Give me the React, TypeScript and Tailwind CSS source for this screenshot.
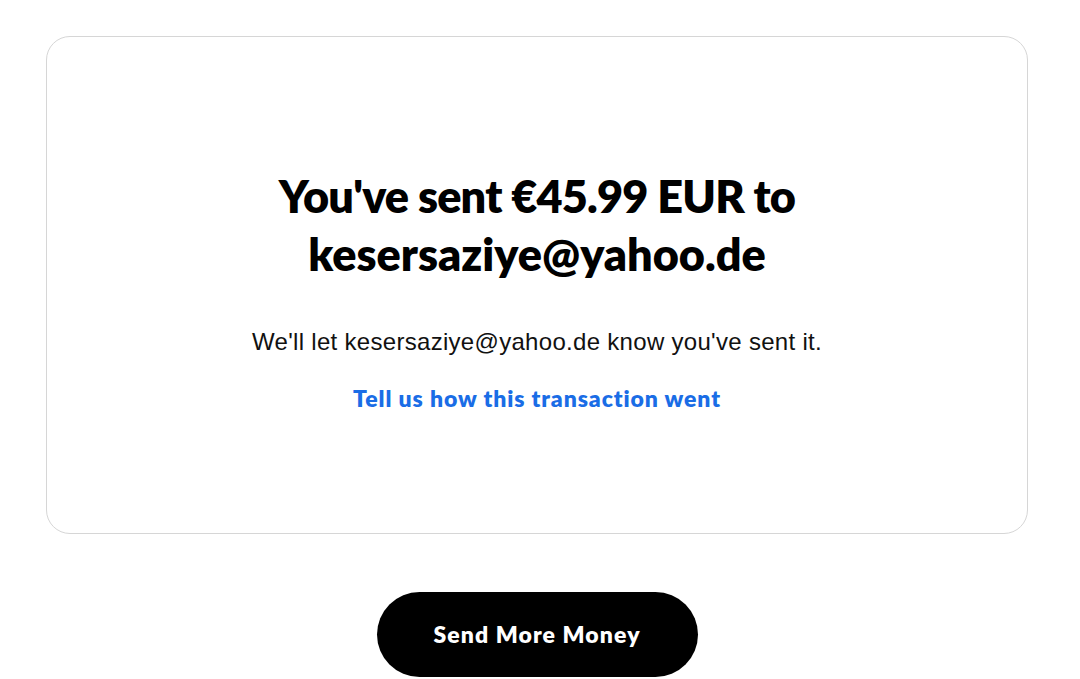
export default function App() {
  return (
    <div className="min-h-[679px] bg-white pl-[46px] pr-[52px] pt-[36px] font-['Lato',sans-serif] text-black">
      <div className="flex h-[498px] flex-col items-center rounded-[24px] border border-[#d6d6d6] pt-[130px]">
        <h1 className="text-center text-[45px] font-extrabold leading-[58px] tracking-[-0.8px]">
          You've sent €45.99 EUR to
          <br />
          <span className="tracking-[0px]">kesersaziye@yahoo.de</span>
        </h1>
        <p className="mt-[44px] font-['Liberation_Sans',sans-serif] text-[24px] leading-[30px] tracking-[0.3px] text-[#111]">
          We'll let kesersaziye@yahoo.de know you've sent it.
        </p>
        <a href="#" className="mt-[26px] text-[23px] font-extrabold leading-[30px] tracking-[0.9px] text-[#1a6de6]">
          Tell us how this transaction went
        </a>
      </div>
      <div className="flex justify-center pt-[58px]">
        <button className="h-[85px] w-[321px] rounded-full bg-black text-[23px] font-extrabold tracking-[1.1px] text-white">
          Send More Money
        </button>
      </div>
    </div>
  )
}
